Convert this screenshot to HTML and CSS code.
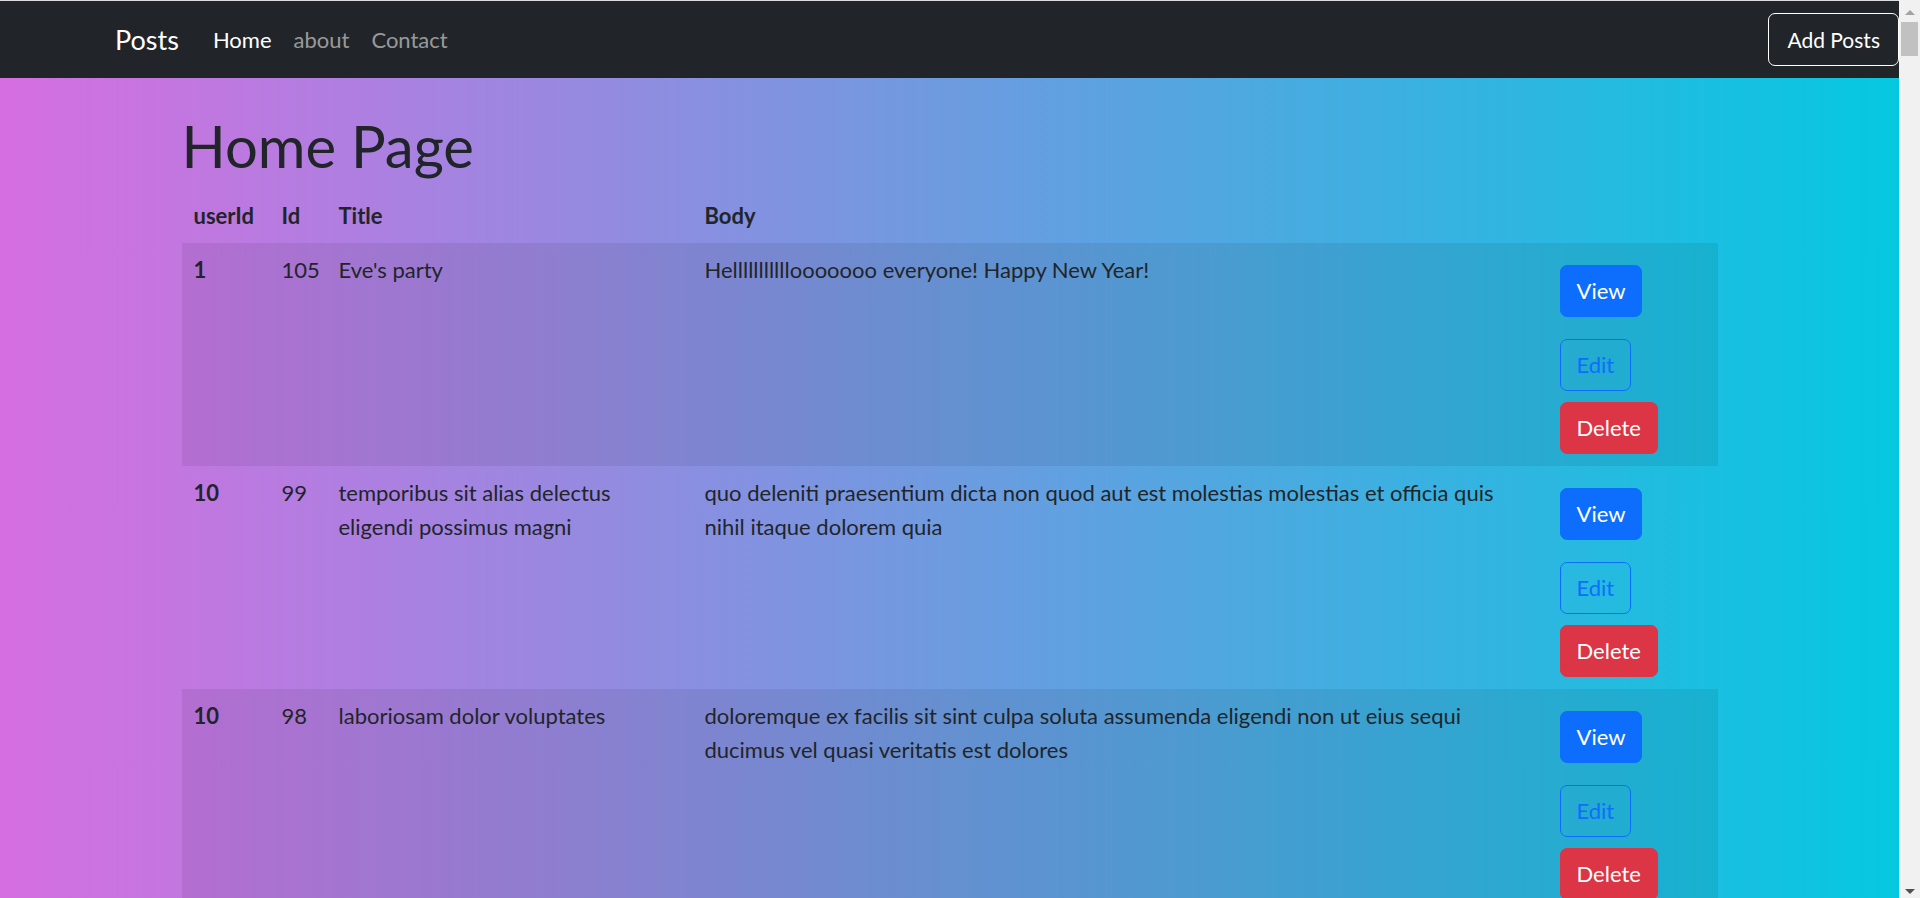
FILE: index.html
```html
<!DOCTYPE html>
<html lang="en">
<head>
<meta charset="utf-8">
<title>Posts</title>
<link rel="stylesheet" href="styles.css">
</head>
<body>
<div class="page">
  <nav class="navbar">
    <a class="brand" href="#">Posts</a>
    <ul class="nav-links">
      <li><a class="nav-link active" href="#">Home</a></li>
      <li><a class="nav-link" href="#">about</a></li>
      <li><a class="nav-link" href="#">Contact</a></li>
    </ul>
    <button class="add-btn" type="button">Add Posts</button>
  </nav>
  <main class="content">
    <h1 class="title">Home Page</h1>
    <table class="posts">
      <colgroup>
        <col class="c-uid"><col class="c-id"><col class="c-title"><col class="c-body"><col class="c-act">
      </colgroup>
      <thead>
        <tr><th>userId</th><th>Id</th><th>Title</th><th>Body</th><th></th></tr>
      </thead>
      <tbody>
        <tr class="striped">
          <td class="uid">1</td>
          <td>105</td>
          <td>Eve's party</td>
          <td>Helllllllllllooooooo everyone! Happy New Year!</td>
          <td><div class="actions"><button class="btn btn-view">View</button><button class="btn btn-edit">Edit</button><button class="btn btn-delete">Delete</button></div></td>
        </tr>
        <tr>
          <td class="uid">10</td>
          <td>99</td>
          <td>temporibus sit alias delectus eligendi possimus magni</td>
          <td>quo deleniti praesentium dicta non quod aut est molestias molestias et officia quis nihil itaque dolorem quia</td>
          <td><div class="actions"><button class="btn btn-view">View</button><button class="btn btn-edit">Edit</button><button class="btn btn-delete">Delete</button></div></td>
        </tr>
        <tr class="striped">
          <td class="uid">10</td>
          <td>98</td>
          <td>laboriosam dolor voluptates</td>
          <td>doloremque ex facilis sit sint culpa soluta assumenda eligendi non ut eius sequi ducimus vel quasi veritatis est dolores</td>
          <td><div class="actions"><button class="btn btn-view">View</button><button class="btn btn-edit">Edit</button><button class="btn btn-delete">Delete</button></div></td>
        </tr>
      </tbody>
    </table>
  </main>
</div>
<div class="scrollbar" aria-hidden="true">
  <span class="sb-up"></span>
  <span class="sb-thumb"></span>
  <span class="sb-down"></span>
</div>
</body>
</html>
```

FILE: styles.css
```css
* { box-sizing: border-box; }

html, body {
  margin: 0;
  height: 100%;
  overflow: hidden;
}

body {
  font-family: Lato, "Noto Sans", sans-serif;
  color: #212529;
  background: #f1f1f1;
}

.page {
  margin-right: 21px;
  height: 100%;
  border-top: 1px solid #dcdcdc;
  background: linear-gradient(90deg, #d66ee0 0%, #05c8e0 100%);
}

/* navbar */
.navbar {
  display: flex;
  align-items: center;
  height: 77px;
  padding-left: 115px;
  background: #212529;
}

.brand {
  font-size: 27px;
  color: #fff;
  text-decoration: none;
  margin-right: 34px;
}

.nav-links {
  display: flex;
  gap: 22px;
  list-style: none;
  margin: 0;
  padding: 0;
}

.nav-link {
  font-size: 22px;
  color: rgba(255, 255, 255, 0.55);
  text-decoration: none;
}

.nav-link.active { color: #fff; }

.add-btn {
  margin-left: auto;
  height: 53px;
  padding: 0 18px;
  font-family: inherit;
  font-size: 21px;
  color: #fff;
  background: transparent;
  border: 1px solid #fff;
  border-radius: 7px;
}

/* content */
.content {
  width: 1536px;
  margin: 0 auto;
}

.title {
  font-size: 58px;
  font-weight: 400;
  line-height: 1.2;
  margin: 33px 0 8px;
}

.posts {
  width: 100%;
  border-collapse: collapse;
  table-layout: fixed;
  font-size: 22px;
  line-height: 34px;
}

.c-uid { width: 88px; }
.c-id { width: 57px; }
.c-title { width: 366px; }
.c-body { width: 855px; }
.c-act { width: 170px; }

.posts th,
.posts td {
  padding: 10px 12px;
  text-align: left;
  vertical-align: top;
}

.posts th { font-weight: 700; }
.posts td.uid { font-weight: 700; }

.posts tr.striped td { background: rgba(0, 0, 0, 0.07); }

.actions {
  display: flex;
  flex-direction: column;
  align-items: flex-start;
  padding-bottom: 2px;
}

.btn {
  font-family: inherit;
  font-size: 22px;
  line-height: 34px;
  padding: 8px 16px;
  border: 1px solid transparent;
  border-radius: 7px;
}

.btn-view {
  margin-top: 12px;
  background: #0d6efd;
  border-color: #0d6efd;
  color: #fff;
}

.btn-edit {
  margin-top: 22px;
  background: transparent;
  border-color: #0d6efd;
  color: #0d6efd;
}

.btn-delete {
  margin-top: 11px;
  background: #dc3545;
  border-color: #dc3545;
  color: #fff;
}

/* scrollbar overlay */
.scrollbar {
  position: fixed;
  top: 0;
  right: 0;
  width: 21px;
  height: 100%;
  background: #f1f1f1;
  display: flex;
  flex-direction: column;
  align-items: center;
}

.sb-up {
  margin-top: 10px;
  width: 0;
  height: 0;
  border-left: 5px solid transparent;
  border-right: 5px solid transparent;
  border-bottom: 5px solid #a3a3a3;
}

.sb-thumb {
  margin-top: 7px;
  width: 17px;
  height: 34px;
  background: #c1c1c1;
}

.sb-down {
  margin-top: auto;
  margin-bottom: 4px;
  width: 0;
  height: 0;
  border-left: 5px solid transparent;
  border-right: 5px solid transparent;
  border-top: 5px solid #505050;
}
```
